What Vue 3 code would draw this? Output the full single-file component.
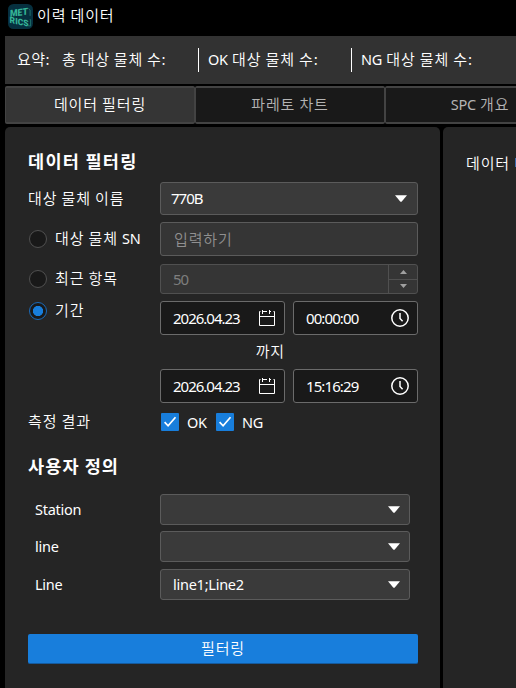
<template>
  <div class="window">
    <header class="title-bar">
      <svg class="logo" viewBox="0 0 25 25">
        <rect width="25" height="25" rx="5.5" fill="#06303f" />
        <g class="logo-text">
          <text transform="matrix(1 -0.12 0 1 2 12.8)" font-size="9.6" textLength="18" lengthAdjust="spacingAndGlyphs">MET</text>
          <text transform="matrix(1 0.2 0 1 1.6 18.8)" font-size="8.8" textLength="19" lengthAdjust="spacingAndGlyphs">RICS</text>
        </g>
        <path d="M20.5 4.5l1.6 1.4v6M21.8 15l.8 1v6l-3-.4" fill="none" stroke="#1d6d68" stroke-width="1" />
      </svg>
      <h1 class="window-title">이력 데이터</h1>
    </header>

    <!-- Summary -->
    <section class="summary">
      <span class="summary-label">요약:</span>
      <span class="summary-item total">총 대상 물체 수:</span>
      <span class="summary-item"><b class="latin">OK</b> 대상 물체 수:</span>
      <span class="summary-item"><b class="latin">NG</b> 대상 물체 수:</span>
    </section>

    <!-- Tabs -->
    <nav class="tabs">
      <button
        v-for="tab in tabs"
        :key="tab.id"
        class="tab"
        :class="{ active: tab.id === activeTab }"
        @click="activeTab = tab.id"
      >
        <b v-if="tab.prefix" class="latin">{{ tab.prefix }}</b>{{ tab.label }}
      </button>
    </nav>

    <main class="content">
      <form class="panel filters" @submit.prevent>
        <h2 class="heading">데이터 필터링</h2>

        <div class="row row-name">
          <span class="label">대상 물체 이름</span>
          <div class="field select">
            <span class="latin digits">770B</span>
            <svg class="caret" viewBox="0 0 12 7"><path d="M0 0.3h12L6.8 6.4q-.8.6-1.6 0z" /></svg>
          </div>
        </div>

        <div class="row row-sn">
          <label class="label radio">
            <input v-model="mode" type="radio" value="sn" />
            <span>대상 물체 <b class="latin">SN</b></span>
          </label>
          <input class="field text-input" type="text" placeholder="입력하기" />
        </div>

        <div class="row row-recent">
          <label class="label radio">
            <input v-model="mode" type="radio" value="recent" />
            <span>최근 항목</span>
          </label>
          <div class="field spin">
            <span class="latin digits spin-value">50</span>
            <div class="spin-buttons">
              <span class="spin-button"><svg viewBox="0 0 7 4"><path d="M3.5 0L7 4H0z" /></svg></span>
              <span class="spin-button"><svg viewBox="0 0 7 4"><path d="M0 0h7L3.5 4z" /></svg></span>
            </div>
          </div>
        </div>

        <div class="row row-period">
          <label class="label radio">
            <input v-model="mode" type="radio" value="period" />
            <span>기간</span>
          </label>
          <div class="period">
            <template v-for="(point, i) in period" :key="i">
              <div class="period-line">
                <div class="field picker">
                  <span class="latin digits">{{ point.date }}</span>
                  <svg class="calendar" viewBox="0 0 16 16">
                    <path d="M1.5 1.5h-1v14h15v-14h-1M4 1.5h4M10.5 1.5h1.5M0.5 6.5h15M3.5 0v4M10.5 0v4" />
                  </svg>
                </div>
                <div class="field picker">
                  <span class="latin time">{{ point.time }}</span>
                  <svg class="clock" viewBox="0 0 18 18">
                    <circle cx="9" cy="9" r="8.2" />
                    <path d="M9 4v5.4l2.6 2.8" />
                  </svg>
                </div>
              </div>
              <span v-if="i === 0" class="until">까지</span>
            </template>
          </div>
        </div>

        <div class="row row-result">
          <span class="label">측정 결과</span>
          <div class="checks">
            <label v-for="result in results" :key="result.name" class="check">
              <input v-model="result.checked" type="checkbox" />
              <span class="box">
                <svg v-if="result.checked" viewBox="0 0 18 18"><path d="M3.6 9.2l3.5 3.6 7.4-8.6" /></svg>
              </span>
              <span class="latin">{{ result.name }}</span>
            </label>
          </div>
        </div>

        <h2 class="heading custom">사용자 정의</h2>

        <div v-for="item in customFields" :key="item.name" class="row row-custom">
          <span class="label latin">{{ item.name }}</span>
          <div class="field select">
            <span class="latin value">{{ item.value }}</span>
            <svg class="caret" viewBox="0 0 12 7"><path d="M0 0.3h12L6.8 6.4q-.8.6-1.6 0z" /></svg>
          </div>
        </div>

        <button class="submit" type="submit">필터링</button>
      </form>

      <section class="panel results">데이터 미리보기</section>
    </main>
  </div>
</template>

<script setup>
import { ref } from 'vue'

const activeTab = ref('filter')
const tabs = [
  { id: 'filter', label: '데이터 필터링' },
  { id: 'pareto', label: '파레토 차트' },
  { id: 'spc', prefix: 'SPC', label: ' 개요' }
]

const mode = ref('period')
const period = [
  { date: '2026.04.23', time: '00:00:00' },
  { date: '2026.04.23', time: '15:16:29' }
]

const results = ref([
  { name: 'OK', checked: true },
  { name: 'NG', checked: true }
])

const customFields = [
  { name: 'Station', value: '' },
  { name: 'line', value: '' },
  { name: 'Line', value: 'line1;Line2' }
]
</script>

<style>
body {
  background: #000;
  overflow: hidden;
}
</style>

<style scoped>
.window {
  width: 516px;
  height: 688px;
  overflow: hidden;
  display: flex;
  flex-direction: column;
  background: #000;
  color: #fff;
  font-family: 'Noto Sans CJK KR', sans-serif;
  font-size: 15px;
  font-weight: 350;
  letter-spacing: 0.85px;
  line-height: 20px;
  white-space: nowrap;
}

.window * {
  box-sizing: border-box;
}

button,
input {
  font: inherit;
  letter-spacing: inherit;
  color: inherit;
}

.latin {
  font-family: 'Noto Sans', sans-serif;
  font-size: 14.5px;
  font-weight: 400;
  letter-spacing: -0.25px;
}

.digits {
  font-size: 15px;
  letter-spacing: -1px;
}

/* Title */
.title-bar {
  height: 36px;
  flex: none;
  display: flex;
  align-items: flex-start;
  padding: 4px 0 0 8px;
}

.logo {
  width: 25px;
  height: 25px;
  margin-right: 4px;
}

.logo-text {
  fill: #35b597;
  font-family: Roboto, sans-serif;
  font-weight: 900;
  letter-spacing: 0;
}

.window-title {
  margin: 1px 0 0;
  font-size: 15px;
  font-weight: 350;
}

/* Summary */
.summary {
  height: 48px;
  flex: none;
  margin-left: 5px;
  padding-left: 12px;
  display: flex;
  align-items: center;
  background: #323232;
}

.summary-label {
  width: 45px;
  height: 24px;
  line-height: 22px;
  letter-spacing: 0.5px;
}

.summary-item {
  width: 153px;
  height: 24px;
  line-height: 22px;
  padding-left: 9px;
  border-left: 1px solid #fff;
}

.summary-item.total {
  width: 136px;
  padding-left: 0;
  border-left: 0;
  letter-spacing: 0.75px;
}

/* Tabs */
.tabs {
  height: 39px;
  flex: none;
  display: flex;
  margin: 2px 0 2px 5px;
}

.tab {
  width: 190px;
  height: 38px;
  flex: none;
  padding: 0 0 2px;
  background: #191919;
  border: 2px solid #434343;
  border-right-width: 1px;
  border-left-width: 1px;
  border-radius: 2px;
  color: #b4b4b4;
}

.tab.active {
  background: #353535;
  color: #fff;
}

/* Panels */
.content {
  flex: 1;
  display: flex;
  gap: 3px;
  padding-left: 5px;
}

.panel {
  background: #252525;
  border-radius: 5px 5px 0 0;
}

.filters {
  width: 435px;
  flex: none;
  padding: 23px 22px 0 23px;
}

.results {
  width: 200px;
  flex: none;
  padding: 26px 0 0 23px;
}

.heading {
  margin: 0;
  height: 32px;
  line-height: 22px;
  font-size: 17.5px;
  font-weight: 700;
  letter-spacing: 1.3px;
}

.row {
  display: flex;
  align-items: center;
}

.label {
  width: 132px;
  flex: none;
  padding-bottom: 2px;
}

.row-name {
  height: 33px;
}

.row-sn {
  height: 34px;
  margin-top: 7px;
}

.row-recent {
  height: 30px;
  margin-top: 8px;
}

.row-period {
  align-items: flex-start;
  margin-top: 7px;
}

.row-result {
  height: 20px;
  margin-top: 9px;
}

.field {
  flex: 1;
  min-width: 0;
  height: 100%;
  display: flex;
  align-items: center;
  border: 1px solid #5b5b5b;
  border-radius: 3px;
  background: #3a3a3a;
}

.field .latin {
  padding-bottom: 1px;
}

.select {
  justify-content: space-between;
  padding: 0 10px;
}

.caret {
  width: 12px;
  height: 7px;
  fill: #fff;
}

.text-input {
  padding: 0 13px 2px;
  background: #353535;
  outline: none;
}

.text-input::placeholder {
  color: #909090;
  opacity: 1;
}

.spin {
  background: #353535;
  border-color: #505050;
}

.spin-value {
  flex: 1;
  padding-left: 12px;
  color: #7e7e7e;
}

.spin-buttons {
  width: 29px;
  height: 100%;
  display: flex;
  flex-direction: column;
  border-left: 1px solid #505050;
}

.spin-button {
  flex: 1;
  display: flex;
  align-items: center;
  justify-content: center;
}

.spin-button + .spin-button {
  border-top: 1px solid #505050;
}

.spin-button svg {
  width: 7px;
  height: 4px;
  fill: #a0a0a0;
}

/* Radio */
.radio {
  display: flex;
  align-items: center;
  gap: 8px;
  padding-bottom: 0;
}

.radio span {
  padding-bottom: 2px;
}

.radio input {
  appearance: none;
  width: 18px;
  height: 18px;
  margin: 0 0 0 1px;
  border: 1.5px solid #505050;
  border-radius: 50%;
  background: #191919;
}

.radio input:checked {
  border-color: #1a6ab8;
  background: radial-gradient(circle, #187edc 0 4.8px, #191919 5.4px);
}

.row-period .radio {
  height: 20px;
}

/* Date and time range */
.period {
  flex: 1;
  display: flex;
  flex-direction: column;
}

.period-line {
  height: 34px;
  display: flex;
  gap: 8px;
}

.picker {
  justify-content: space-between;
  padding: 0 9px 0 12px;
  background: #191919;
  border-color: #6b6b6b;
}

.picker svg {
  fill: none;
  stroke: #fff;
  margin-bottom: 1px;
}

.picker .time {
  font-size: 15px;
  letter-spacing: -0.9px;
}

.calendar {
  width: 16px;
  height: 16px;
}

.clock {
  width: 18px;
  height: 18px;
  stroke-width: 1.5;
  margin-right: -1px;
}

.until {
  width: 125px;
  height: 34px;
  line-height: 31px;
  text-align: right;
}

/* Checkboxes */
.checks {
  display: flex;
}

.check {
  display: flex;
  align-items: center;
  width: 55px;
  padding-left: 1px;
}

.check input {
  display: none;
}

.box {
  width: 18px;
  height: 18px;
  margin-right: 8px;
  border-radius: 1px;
  background: #187edc;
}

.box svg {
  display: block;
  fill: none;
  stroke: #fff;
  stroke-width: 1.7;
}

/* Custom fields */
.heading.custom {
  height: 39px;
  margin-top: 23px;
  letter-spacing: 1.1px;
}

.row-custom {
  height: 31px;
  margin: 0 8px 6px 0;
}

.row-custom + .row-custom {
  margin-bottom: 7px;
}

.row-custom .label {
  padding-left: 7px;
}

.row-custom .select {
  padding-right: 9px;
}

.row-custom .value {
  padding-left: 2px;
}

.submit {
  display: block;
  width: 390px;
  height: 30px;
  margin: 34px 0 0;
  padding: 0 0 2px;
  border: 0;
  border-bottom: 1px solid #155a9c;
  border-radius: 2px;
  background: #187edc;
}
</style>
